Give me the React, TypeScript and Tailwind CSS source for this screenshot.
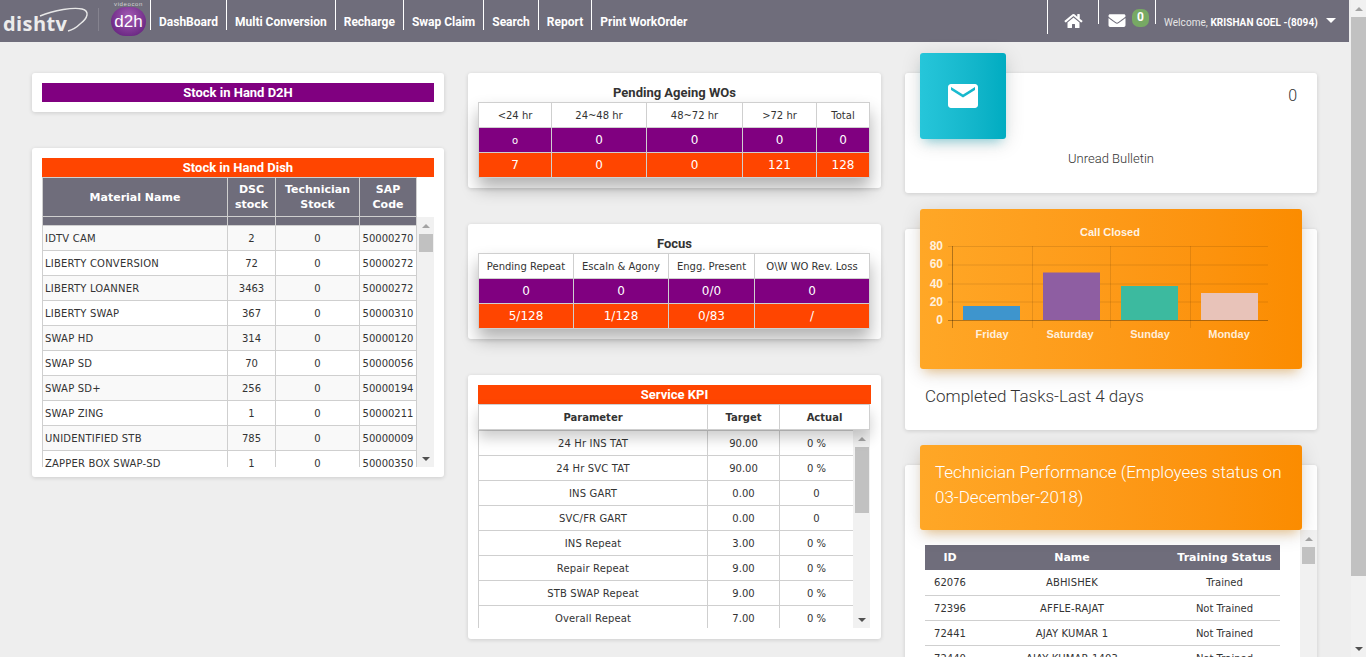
import React from 'react';
import { FaHome, FaEnvelope } from 'react-icons/fa';
import { MdEmail } from 'react-icons/md';

const navItems = ['DashBoard', 'Multi Conversion', 'Recharge', 'Swap Claim', 'Search', 'Report', 'Print WorkOrder'];

const stockRows = [
  ['IDTV CAM', '2', '0', '50000270'],
  ['LIBERTY CONVERSION', '72', '0', '50000272'],
  ['LIBERTY LOANNER', '3463', '0', '50000272'],
  ['LIBERTY SWAP', '367', '0', '50000310'],
  ['SWAP HD', '314', '0', '50000120'],
  ['SWAP SD', '70', '0', '50000056'],
  ['SWAP SD+', '256', '0', '50000194'],
  ['SWAP ZING', '1', '0', '50000211'],
  ['UNIDENTIFIED STB', '785', '0', '50000009'],
  ['ZAPPER BOX SWAP-SD', '1', '0', '50000350'],
];

const kpiRows = [
  ['24 Hr INS TAT', '90.00', '0 %'],
  ['24 Hr SVC TAT', '90.00', '0 %'],
  ['INS GART', '0.00', '0'],
  ['SVC/FR GART', '0.00', '0'],
  ['INS Repeat', '3.00', '0 %'],
  ['Repair Repeat', '9.00', '0 %'],
  ['STB SWAP Repeat', '9.00', '0 %'],
  ['Overall Repeat', '7.00', '0 %'],
];

const techRows = [
  ['62076', 'ABHISHEK', 'Trained'],
  ['72396', 'AFFLE-RAJAT', 'Not Trained'],
  ['72441', 'AJAY KUMAR 1', 'Not Trained'],
  ['72440', 'AJAY KUMAR 1403', 'Not Trained'],
];

const bars = [
  { label: 'Friday', x: 963, y: 306, h: 14, c: '#3e95cd', lx: 992 },
  { label: 'Saturday', x: 1043, y: 272.5, h: 47.5, c: '#8e5ea2', lx: 1070 },
  { label: 'Sunday', x: 1121, y: 286, h: 34, c: '#3cba9f', lx: 1150 },
  { label: 'Monday', x: 1201, y: 293, h: 27, c: '#e8c3b9', lx: 1229 },
];

const Scrollbar = ({ wrap, thumb }: { wrap: string; thumb: string }) => (
  <div className={`flex flex-col items-center bg-[#f1f1f1] ${wrap}`}>
    <div className="flex h-[17px] w-full shrink-0 items-center justify-center">
      <div className="h-0 w-0 border-x-[4px] border-b-[4px] border-x-transparent border-b-[#a3a3a3]" />
    </div>
    <div className={`shrink-0 bg-[#c1c1c1] ${thumb}`} />
    <div className="flex-1" />
    <div className="flex h-[17px] w-full shrink-0 items-center justify-center">
      <div className="h-0 w-0 border-x-[4px] border-t-[4px] border-x-transparent border-t-[#505050]" />
    </div>
  </div>
);

const Card = ({ className = '', children }: { className?: string; children: React.ReactNode }) => (
  <div className={`rounded-[3px] bg-white shadow-[0_1px_4px_rgba(0,0,0,0.14)] ${className}`}>{children}</div>
);

const Bar = ({ color, children }: { color: string; children: React.ReactNode }) => (
  <div className={`h-[19px] text-center font-['Roboto',sans-serif] text-[13px] leading-[19px] font-bold text-white ${color}`}>
    {children}
  </div>
);

const cell = 'h-[25px] border border-[#cfcfcf] p-0 text-center';
const nameCell = 'h-[25px] border border-[#cfcfcf] p-0 text-center tracking-[0.15px]';

const SummaryTable = ({ widths, head, purple, orange }: { widths: number[]; head: string[]; purple: string[]; orange: string[] }) => (
  <table className="w-[391px] table-fixed border-collapse font-['DejaVu_Sans',sans-serif] shadow-[0_10px_16px_rgba(0,0,0,0.3)]">
    <colgroup>
      {widths.map((w, i) => (
        <col key={i} style={{ width: w }} />
      ))}
    </colgroup>
    <tbody>
      <tr className="bg-white text-[10px] text-[#333]">
        {head.map((h) => (
          <td key={h} className={cell}>{h}</td>
        ))}
      </tr>
      <tr className="bg-[#800080] text-[12px] text-white">
        {purple.map((h, i) => (
          <td key={i} className={`${cell} ${i === 0 && h === 'o' ? 'text-[10px]' : ''}`}>{h}</td>
        ))}
      </tr>
      <tr className="bg-[#ff4500] text-[12px] text-white">
        {orange.map((h, i) => (
          <td key={i} className={cell}>{h}</td>
        ))}
      </tr>
    </tbody>
  </table>
);

const Header = () => (
  <div className="flex h-[42px] w-[1349px] shrink-0 bg-[#6f6d7b] text-white">
    {/* logos */}
    <div className="relative h-[42px] w-[98px] shrink-0">
      <span className="absolute top-[9px] left-[3px] font-['Open_Sans',sans-serif] text-[20px] leading-[30px] font-bold tracking-[0.4px] text-[#ececec]">
        dishtv
      </span>
      <svg className="absolute top-[6px] left-[36px]" width="56" height="28" viewBox="0 0 56 28" fill="none">
        <path d="M4 10 C 18 4, 38 1, 46 3 C 54 5, 52 12, 44 18 C 40 22, 36 24, 32 25" stroke="#e8e8e8" strokeWidth="1.4" />
      </svg>
    </div>
    <div className="mt-[8px] h-[23px] w-px shrink-0 bg-[#85838f]" />
    <div className="flex w-[51px] shrink-0 flex-col items-center pl-[8px]">
      <span className="h-[7px] font-['Liberation_Sans',sans-serif] text-[6px] leading-[8px] tracking-[0.6px] text-[#d5d5d5]">videocon</span>
      <div className="flex h-[29px] w-[35px] items-center justify-center rounded-full bg-[radial-gradient(circle_at_50%_35%,#a45bb5,#6d2a85_75%)] font-['Liberation_Sans',sans-serif] text-[17px] text-white">
        d2h
      </div>
    </div>
    {/* nav */}
    <div className="flex items-start">
      {navItems.map((n) => (
        <div key={n} className="flex h-[30px] items-center border-l border-white pt-[13px] pr-[8px] pl-[8px] font-['Roboto',sans-serif] text-[12px] font-bold whitespace-nowrap">
          {n}
        </div>
      ))}
    </div>
    <div className="flex-1" />
    {/* right side */}
    <div className="flex w-[302px] shrink-0 items-start">
      <div className="flex h-[34px] w-[51px] shrink-0 justify-center border-l border-white pt-[13px]">
        <FaHome className="h-[16px] w-[19px]" />
      </div>
      <div className="relative flex h-[24px] w-[57px] shrink-0 border-l border-white pt-[12px] pl-[9px]">
        <FaEnvelope className="h-[17px] w-[18px]" />
        <span className="absolute top-[9px] left-[33px] h-[18px] w-[17px] rounded-[7px] bg-[#77a964] text-center font-['Roboto',sans-serif] text-[12px] leading-[16px] font-bold">
          0
        </span>
      </div>
      <div className="flex h-[24px] shrink-0 items-start border-l border-white pt-[16px] pl-[8px] font-['Roboto',sans-serif] text-[10px] leading-[14px] tracking-[0.05px] whitespace-nowrap text-[#e6e6e6]">
        Welcome,&nbsp;<b className="text-white">KRISHAN GOEL -(8094)</b>
        <div className="mt-[2px] ml-[8px] h-0 w-0 border-x-[5px] border-t-[5px] border-x-transparent border-t-white" />
      </div>
    </div>
  </div>
);

const LeftColumn = () => (
  <div className="flex w-[412px] shrink-0 flex-col gap-[36px]">
    <Card className="p-[10px]">
      <Bar color="bg-[#800080]">Stock in Hand D2H</Bar>
    </Card>
    <Card className="p-[10px]">
      <Bar color="bg-[#ff4500]">Stock in Hand Dish</Bar>
      <div className="flex h-[290px]">
        <div className="h-[290px] w-[375px] shrink-0 overflow-hidden">
          <table className="w-[374px] table-fixed border-collapse font-['DejaVu_Sans',sans-serif] text-[10px] text-[#333]">
            <colgroup>
              <col className="w-[185px]" />
              <col className="w-[48px]" />
              <col className="w-[84px]" />
              <col className="w-[57px]" />
            </colgroup>
            <thead>
              <tr className="h-[39px] bg-[#6f6d7b] text-[11px] leading-[15px] font-bold text-white">
                <th className="border border-[#cfcfcf] p-0">Material Name</th>
                <th className="border border-[#cfcfcf] p-0">DSC stock</th>
                <th className="border border-[#cfcfcf] p-0">Technician Stock</th>
                <th className="border border-[#cfcfcf] p-0">SAP Code</th>
              </tr>
              <tr className="h-[9px] bg-[#6f6d7b]">
                <th className="border border-[#cfcfcf] p-0" />
                <th className="border border-[#cfcfcf] p-0" />
                <th className="border border-[#cfcfcf] p-0" />
                <th className="border border-[#cfcfcf] p-0" />
              </tr>
            </thead>
            <tbody>
              {stockRows.map((r, i) => (
                <tr key={r[0]} className={i % 2 === 0 ? 'bg-[#f9f9f9]' : 'bg-white'}>
                  <td className="h-[25px] border border-[#cfcfcf] p-0 pl-[2px] tracking-[0.2px]">{r[0]}</td>
                  <td className={cell}>{r[1]}</td>
                  <td className={cell}>{r[2]}</td>
                  <td className={cell}>{r[3]}</td>
                </tr>
              ))}
            </tbody>
          </table>
        </div>
        <Scrollbar wrap="mt-[40px] h-[250px] w-[17px] shrink-0" thumb="h-[18px] w-[14px]" />
      </div>
    </Card>
  </div>
);

const MiddleColumn = () => (
  <div className="flex w-[413px] shrink-0 flex-col gap-[36px]">
    <Card className="px-[10px] pt-[10px] pb-[10px]">
      <div className="h-[19px] pt-[1px] text-center font-['Roboto',sans-serif] text-[13px] leading-[18px] font-bold text-[#333]">Pending Ageing WOs</div>
      <SummaryTable
        widths={[73, 95, 96, 74, 53]}
        head={['<24 hr', '24~48 hr', '48~72 hr', '>72 hr', 'Total']}
        purple={['o', '0', '0', '0', '0']}
        orange={['7', '0', '0', '121', '128']}
      />
    </Card>
    <Card className="px-[10px] pt-[10px] pb-[10px]">
      <div className="h-[19px] pt-[1px] text-center font-['Roboto',sans-serif] text-[13px] leading-[18px] font-bold text-[#333]">Focus</div>
      <SummaryTable
        widths={[95, 95, 86, 115]}
        head={['Pending Repeat', 'Escaln & Agony', 'Engg. Present', 'O\\W WO Rev. Loss']}
        purple={['0', '0', '0/0', '0']}
        orange={['5/128', '1/128', '0/83', '/']}
      />
    </Card>
    <Card className="px-[10px] pt-[10px] pb-[11px]">
      <Bar color="bg-[#ff4500]">Service KPI</Bar>
      <table className="relative z-10 w-[391px] table-fixed border-collapse bg-white font-['DejaVu_Sans',sans-serif] text-[10px] font-bold text-[#333] shadow-[0_8px_14px_rgba(0,0,0,0.2)]">
        <colgroup>
          <col className="w-[229px]" />
          <col className="w-[72px]" />
          <col className="w-[90px]" />
        </colgroup>
        <thead>
          <tr>
            <th className={cell}>Parameter</th>
            <th className={cell}>Target</th>
            <th className={cell}>Actual</th>
          </tr>
        </thead>
      </table>
      <div className="flex h-[198px]">
        <div className="h-[198px] w-[375px] shrink-0 overflow-hidden">
          <table className="w-[375px] table-fixed border-collapse font-['DejaVu_Sans',sans-serif] text-[10px] text-[#333]">
            <colgroup>
              <col className="w-[229px]" />
              <col className="w-[72px]" />
              <col className="w-[74px]" />
            </colgroup>
            <tbody>
              {kpiRows.map((r) => (
                <tr key={r[0]}>
                  <td className={nameCell}>{r[0]}</td>
                  <td className={cell}>{r[1]}</td>
                  <td className={cell}>{r[2]}</td>
                </tr>
              ))}
            </tbody>
          </table>
        </div>
        <Scrollbar wrap="h-[198px] w-[17px] shrink-0" thumb="h-[66px] w-[14px]" />
      </div>
    </Card>
  </div>
);

const ChartTile = () => (
  <div className="relative z-10 mx-[15px] -mt-[20px] h-[160px] rounded-[3px] bg-gradient-to-r from-[#ffa726] to-[#fb8c00] shadow-[0_4px_20px_rgba(0,0,0,0.14),0_7px_10px_-5px_rgba(255,152,0,0.4)]">
    <svg width="382" height="160" viewBox="920 209 382 160" className="block font-['Liberation_Sans',sans-serif]">
      <text x="1110" y="236" textAnchor="middle" fontSize="11" fontWeight="700" fill="#fff" fillOpacity="0.9">Call Closed</text>
      {[246.5, 265, 284, 302].map((y) => (
        <line key={y} x1="948" x2="1268" y1={y} y2={y} stroke="#000" strokeOpacity="0.1" />
      ))}
      <line x1="948" x2="1268" y1="320.5" y2="320.5" stroke="#000" strokeOpacity="0.3" />
      {[1032.5, 1110.5, 1190.5].map((x) => (
        <line key={x} x1={x} x2={x} y1="246" y2="328" stroke="#000" strokeOpacity="0.1" />
      ))}
      <line x1="952.5" x2="952.5" y1="246" y2="328" stroke="#000" strokeOpacity="0.3" />
      {['80', '60', '40', '20', '0'].map((t, i) => (
        <text key={t} x="943" y={[250, 268, 288, 306, 324][i]} textAnchor="end" fontSize="12" fontWeight="700" fill="#fff" fillOpacity="0.85">{t}</text>
      ))}
      {bars.map((b) => (
        <g key={b.label}>
          <rect x={b.x} y={b.y} width="57" height={b.h} fill={b.c} />
          <text x={b.lx} y="338" textAnchor="middle" fontSize="11" fontWeight="700" fill="#fff" fillOpacity="0.85">{b.label}</text>
        </g>
      ))}
    </svg>
  </div>
);

const RightColumn = () => (
  <div className="flex w-[412px] shrink-0 flex-col gap-[36px]">
    <Card className="h-[120px] font-['Roboto',sans-serif] text-[#333]">
      <div className="flex justify-between pr-[20px]">
        <div className="relative z-10 ml-[15px] -mt-[20px] flex h-[86px] w-[86px] items-center justify-center rounded-[3px] bg-gradient-to-r from-[#26c6da] to-[#00acc1] shadow-[0_4px_20px_rgba(0,0,0,0.14),0_7px_10px_-5px_rgba(0,188,212,0.4)]">
          <MdEmail className="h-[36px] w-[36px] text-white" />
        </div>
        <span className="pt-[13px] text-[16px] leading-[20px] font-light">0</span>
      </div>
      <div className="mt-[10px] text-center text-[13px] leading-[20px] font-light">Unread Bulletin</div>
    </Card>
    <Card className="h-[201px]">
      <ChartTile />
      <div className="mt-[16px] pl-[20px] font-['Roboto',sans-serif] text-[17px] leading-[22px] font-light text-[#333]">
        Completed Tasks-Last 4 days
      </div>
    </Card>
    <Card className="-mt-px h-[300px]">
      <div className="relative z-10 mx-[15px] -mt-[20px] h-[85px] rounded-[3px] bg-gradient-to-r from-[#ffa726] to-[#fb8c00] px-[15px] pt-[15px] font-['Roboto',sans-serif] text-[17px] leading-[25px] font-light text-white shadow-[0_4px_20px_rgba(0,0,0,0.14),0_7px_10px_-5px_rgba(255,152,0,0.4)]">
        Technician Performance (Employees status on 03-December-2018)
      </div>
      <div className="flex">
        <div className="ml-[20px] w-[355px] shrink-0 pt-[15px]">
          <table className="w-[355px] table-fixed border-collapse font-['DejaVu_Sans',sans-serif] text-[10px] text-[#333]">
            <colgroup>
              <col className="w-[50px]" />
              <col className="w-[194px]" />
              <col className="w-[111px]" />
            </colgroup>
            <thead>
              <tr className="h-[25px] bg-[#6f6d7b] text-[11px] font-bold text-white">
                <th className="p-0 pt-[2px]">ID</th>
                <th className="p-0 pt-[2px]">Name</th>
                <th className="p-0 pt-[2px] whitespace-nowrap">Training Status</th>
              </tr>
            </thead>
            <tbody>
              {techRows.map((r) => (
                <tr key={r[0]} className="h-[25px] border-b border-[#cfcfcf]">
                  <td className="p-0 pt-[1px] text-center">{r[0]}</td>
                  <td className="p-0 pt-[1px] text-center tracking-[0.15px]">{r[1]}</td>
                  <td className="p-0 pt-[1px] text-center">{r[2]}</td>
                </tr>
              ))}
            </tbody>
          </table>
        </div>
        <Scrollbar wrap="ml-auto h-[215px] w-[17px] shrink-0" thumb="h-[17px] w-[13px]" />
      </div>
    </Card>
  </div>
);

export default function App() {
  return (
    <div className="flex h-[657px] w-[1366px] overflow-hidden bg-[#eeeeee]">
      <div className="flex w-[1351px] shrink-0 flex-col">
        <Header />
        <div className="flex gap-[24px] pt-[31px] pl-[32px]">
          <LeftColumn />
          <MiddleColumn />
          <RightColumn />
        </div>
      </div>
      <Scrollbar wrap="h-[657px] w-[15px] shrink-0" thumb="h-[559px] w-[15px]" />
    </div>
  );
}
